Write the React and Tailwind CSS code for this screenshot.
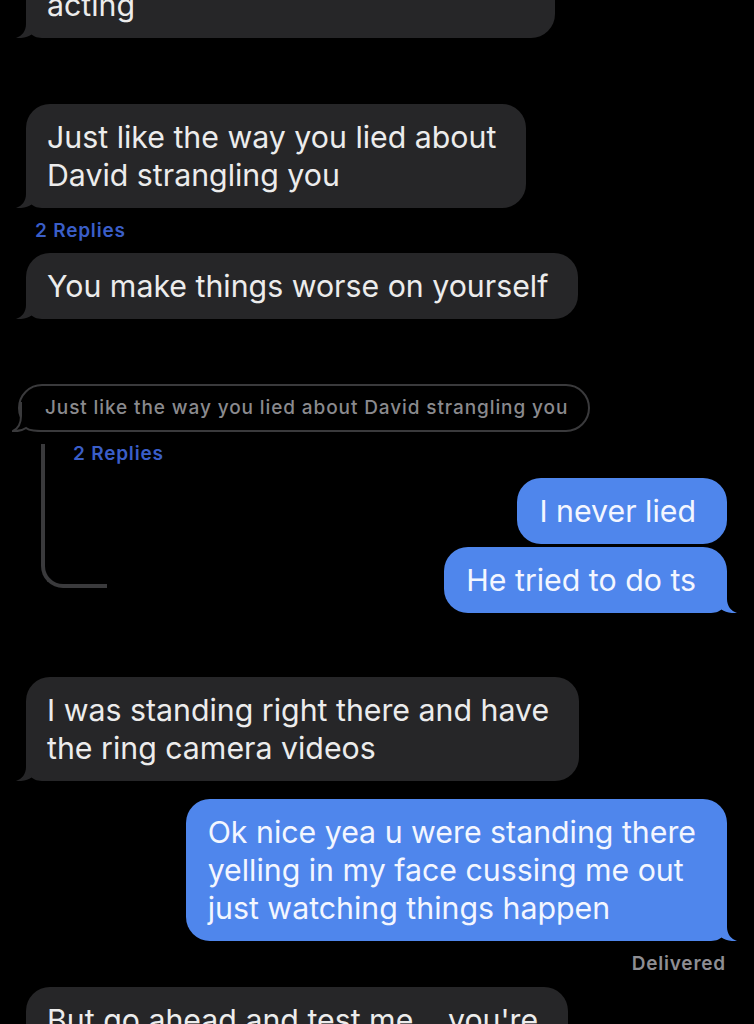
const LeftTail = ({ color = "#262628" }) => (
  <svg className="absolute bottom-0 left-[-10px]" width="36" height="26" viewBox="0 0 36 26">
    <path d="M10,0 L10,12 C10,19 6,24 0,26 C7,26.5 12,25 15.5,22.5 C18.5,25 22,26 28,26 L36,26 L36,0 Z" fill={color} />
  </svg>
);

const RightTail = ({ color = "#4f86ec" }) => (
  <svg className="absolute bottom-0 right-[-10px]" width="36" height="26" viewBox="0 0 36 26">
    <path d="M26,0 L26,12 C26,19 30,24 36,26 C29,26.5 24,25 20.5,22.5 C17.5,25 14,26 8,26 L0,26 L0,0 Z" fill={color} />
  </svg>
);

const Incoming = ({ children, className = "" }) => (
  <div className={"relative self-start ml-[26px] rounded-[24px] bg-[#262628] pl-[21px] pr-[30px] py-[14px] text-[30.3px] leading-[38px] text-[#ececec] whitespace-nowrap " + className}>
    <LeftTail />
    <span className="relative">{children}</span>
  </div>
);

const Outgoing = ({ children, tail = true, className = "" }) => (
  <div className={"relative rounded-[24px] bg-[#4f86ec] pl-[22px] pr-[31px] py-[14px] text-[30.3px] leading-[38px] text-[#f3f6ff] whitespace-nowrap " + className}>
    {tail && <RightTail />}
    <span className="relative">{children}</span>
  </div>
);

export default function App() {
  return (
    <div className="h-[1024px] overflow-hidden bg-black font-['Inter','Noto_Sans',sans-serif] antialiased">
      <div className="flex flex-col">
        <Incoming className="mt-[-28px] w-[529px]">acting</Incoming>

        <Incoming className="mt-[66px]">
          Just like the way you lied about
          <br />
          David strangling you
        </Incoming>
        <div className="ml-[35px] mt-[13px] text-[19px] leading-[20px] font-semibold tracking-[0.8px] text-[#3a5ec8]">2 Replies</div>
        <Incoming className="mt-[12px]">You make things worse on yourself</Incoming>

        {/* quoted message of the thread */}
        <div className="relative ml-[18px] mt-[65px] flex h-[48px] w-[572px] items-center rounded-[24px] border-2 border-[#3a3a3c] pl-[25px] text-[19px] font-medium tracking-[0.9px] text-[#8a8a8e] whitespace-nowrap">
          <svg className="absolute bottom-[-2px] left-[-8px]" width="40" height="30" viewBox="0 0 40 30">
            <rect x="8" y="0" width="24" height="28" fill="black" />
            <path d="M9,0 L9,14 C9,22 5,27 1,29 C6,29.5 11,28 14,26 C17,28.5 22,29 40,29" fill="none" stroke="#3a3a3c" strokeWidth="2" />
          </svg>
          <span className="relative">Just like the way you lied about David strangling you</span>
        </div>

        <div className="flex items-start">
          <div className="ml-[41px] mt-[12px] h-[144px] w-[66px] shrink-0 rounded-bl-[22px] border-b-4 border-l-4 border-[#3a3a3c] pl-[28px]">
            <div className="whitespace-nowrap text-[19px] leading-[20px] font-semibold tracking-[0.8px] text-[#3a5ec8]">2 Replies</div>
          </div>
          <div className="mt-[46px] flex flex-1 flex-col items-end gap-[3px] pr-[27px]">
            <Outgoing tail={false}>I never lied</Outgoing>
            <Outgoing>He tried to do ts</Outgoing>
          </div>
        </div>

        <Incoming className="mt-[64px]">
          I was standing right there and have
          <br />
          the ring camera videos
        </Incoming>

        <div className="mt-[18px] flex flex-col items-end pr-[27px]">
          <Outgoing>
            Ok nice yea u were standing there
            <br />
            yelling in my face cussing me out
            <br />
            just watching things happen
          </Outgoing>
          <div className="mt-[13px] pr-[1px] text-[19px] leading-[20px] font-semibold tracking-[0.8px] text-[#8e8e93]">Delivered</div>
        </div>

        <Incoming className="mt-[13px]">But go ahead and test me... you're</Incoming>
      </div>
    </div>
  );
}
